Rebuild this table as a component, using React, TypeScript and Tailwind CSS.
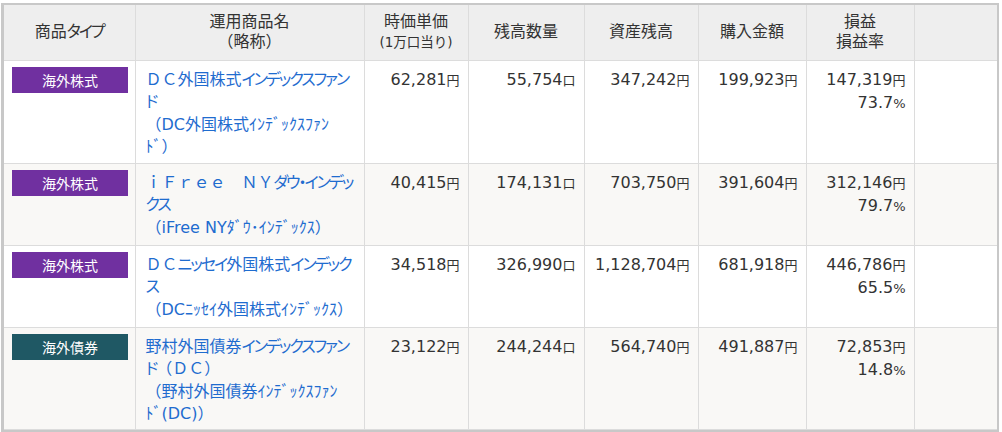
import React from 'react'

const KANA = /([\u30A0-\u30FF]+)/

// full-width katakana runs get proportional widths, like the narrow kana in the original
function Jp({ text }: { text: string }) {
  return (
    <>
      {text.split(KANA).map((s, i) =>
        i % 2 ? (
          <span key={i} className="[font-feature-settings:'palt'] tracking-[-2px]">
            {s}
          </span>
        ) : (
          s
        )
      )}
    </>
  )
}

interface Fund {
  type: string
  badge: string
  name: string[]
  price: string
  qty: string
  balance: string
  cost: string
  pl: string
  rate: string
  bg: string
  h: string
}

const FUNDS: Fund[] = [
  {
    type: '海外株式',
    badge: 'bg-[#7030a0]',
    name: ['ＤＣ外国株式インデックスファン', 'ド', '（DC外国株式ｲﾝﾃﾞｯｸｽﾌｧﾝ', 'ﾄﾞ）'],
    price: '62,281',
    qty: '55,754',
    balance: '347,242',
    cost: '199,923',
    pl: '147,319',
    rate: '73.7',
    bg: 'bg-white',
    h: 'h-[103px]',
  },
  {
    type: '海外株式',
    badge: 'bg-[#7030a0]',
    name: ['ｉＦｒｅｅ　ＮＹダウ・インデッ', 'クス', '（iFree NYﾀﾞｳ･ｲﾝﾃﾞｯｸｽ）'],
    price: '40,415',
    qty: '174,131',
    balance: '703,750',
    cost: '391,604',
    pl: '312,146',
    rate: '79.7',
    bg: 'bg-[#f9f8f6]',
    h: 'h-[82px]',
  },
  {
    type: '海外株式',
    badge: 'bg-[#7030a0]',
    name: ['ＤＣニッセイ外国株式インデック', 'ス', '（DCﾆｯｾｲ外国株式ｲﾝﾃﾞｯｸｽ）'],
    price: '34,518',
    qty: '326,990',
    balance: '1,128,704',
    cost: '681,918',
    pl: '446,786',
    rate: '65.5',
    bg: 'bg-white',
    h: 'h-[82px]',
  },
  {
    type: '海外債券',
    badge: 'bg-[#1f5864]',
    name: ['野村外国債券インデックスファン', 'ド（ＤＣ）', '（野村外国債券ｲﾝﾃﾞｯｸｽﾌｧﾝ', 'ﾄﾞ(DC)）'],
    price: '23,122',
    qty: '244,244',
    balance: '564,740',
    cost: '491,887',
    pl: '72,853',
    rate: '14.8',
    bg: 'bg-[#f9f8f6]',
    h: 'h-[102px]',
  },
]

function Num({ value, unit }: { value: string; unit: string }) {
  return (
    <div className="whitespace-nowrap">
      {value}
      <span className="text-[13px]">{unit}</span>
    </div>
  )
}

export default function App() {
  const th = 'border-r border-b border-[#dcdcdc] text-center align-middle font-normal'
  const td = 'border-r border-b border-[#dcdcdc] align-top pt-2 pr-2 text-right'

  return (
    <div className="pt-[3px] pl-[1px] bg-white">
      <div className="w-[998px] border-[#c8c8c8] border-t-2 border-r-2 border-b-2 border-l-[3px] font-['DejaVu_Sans','Noto_Sans_CJK_JP',sans-serif] text-[16px] text-[#333]">
        <table className="w-[993px] table-fixed border-collapse">
          <colgroup>
            <col className="w-[131px]" />
            <col className="w-[229px]" />
            <col className="w-[104px]" />
            <col className="w-[116px]" />
            <col className="w-[114px]" />
            <col className="w-[108px]" />
            <col className="w-[108px]" />
            <col className="w-[83px]" />
          </colgroup>
          <thead>
            <tr className="h-[55px] bg-[#eeeeee] leading-[20px]">
              <th className={th}>
                <Jp text="商品タイプ" />
              </th>
              <th className={th}>
                運用商品名
                <br />
                （略称）
              </th>
              <th className={th}>
                時価単価
                <br />
                <span className="text-[13.5px]">(1万口当り)</span>
              </th>
              <th className={th}>残高数量</th>
              <th className={th}>資産残高</th>
              <th className={th}>購入金額</th>
              <th className={th}>
                損益
                <br />
                損益率
              </th>
              <th className="border-b border-[#dcdcdc]" />
            </tr>
          </thead>
          <tbody className="leading-[22.5px]">
            {FUNDS.map((f, i) => (
              <tr key={i} className={`${f.h} ${f.bg}`}>
                <td className="border-r border-b border-[#dcdcdc] align-top pt-[6px] pl-2">
                  <div
                    className={`${f.badge} w-[116px] h-[26px] leading-[26px] text-center text-white text-[14px] font-['Noto_Sans_CJK_JP',sans-serif]`}
                  >
                    {f.type}
                  </div>
                </td>
                <td className="border-r border-b border-[#dcdcdc] align-top pt-2 pl-[10px] text-[#1f6ccf]">
                  {f.name.map((line, j) => (
                    <div key={j} className="whitespace-nowrap">
                      <Jp text={line} />
                    </div>
                  ))}
                </td>
                <td className={td}>
                  <Num value={f.price} unit="円" />
                </td>
                <td className={td}>
                  <Num value={f.qty} unit="口" />
                </td>
                <td className={td}>
                  <Num value={f.balance} unit="円" />
                </td>
                <td className={td}>
                  <Num value={f.cost} unit="円" />
                </td>
                <td className={td}>
                  <Num value={f.pl} unit="円" />
                  <Num value={f.rate} unit="%" />
                </td>
                <td className="border-b border-[#dcdcdc]" />
              </tr>
            ))}
          </tbody>
        </table>
      </div>
    </div>
  )
}
